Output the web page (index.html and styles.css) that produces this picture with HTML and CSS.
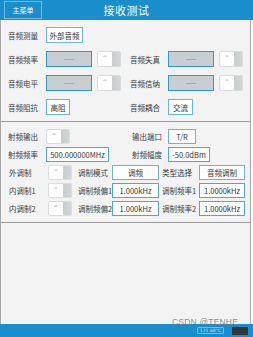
FILE: index.html
```html
<!doctype html>
<html lang="zh">
<head>
    <meta charset="utf-8">
    <title>接收测试</title>
    <link rel="stylesheet" href="styles.css">
</head>
<body>
<div class="screen">
    <header class="topbar">
        <button class="menu-btn">主菜单</button>
        <h1 class="title">接收测试</h1>
        <span></span>
    </header>

    <main class="panel">
        <section class="audio">
            <div class="row">
                <div class="field"><label>音频测量</label><button class="btn w37">外部音频</button></div>
                <div class="field"></div>
            </div>
            <div class="row">
                <div class="field"><label>音频频率</label><span class="readout">-----</span><span class="toggle"></span></div>
                <div class="field"><label>音频失真</label><span class="readout">-----</span><span class="toggle"></span></div>
            </div>
            <div class="row">
                <div class="field"><label>音频电平</label><span class="readout">-----</span><span class="toggle"></span></div>
                <div class="field"><label>音频信纳</label><span class="readout">-----</span><span class="toggle"></span></div>
            </div>
            <div class="row">
                <div class="field"><label>音频阻抗</label><button class="btn w24">高阻</button></div>
                <div class="field"><label>音频耦合</label><button class="btn w25">交流</button></div>
            </div>
        </section>

        <section class="rf">
            <div class="row">
                <div class="field"><label>射频输出</label><span class="toggle off"></span></div>
                <div class="field"><label class="right">输出端口</label><button class="btn w28">T/R</button></div>
            </div>
            <div class="row">
                <div class="field"><label>射频频率</label><span class="entry w63">500.000000MHz</span></div>
                <div class="field"><label class="right">射频幅度</label><span class="entry w42">-50.0dBm</span></div>
            </div>
            <div class="mod-row">
                <label>外调制</label><span class="toggle off"></span>
                <label class="sub">调制模式</label><button class="btn">调频</button>
                <label class="sub2">类型选择</label><button class="btn">音频调制</button>
            </div>
            <div class="mod-row">
                <label>内调制1</label><span class="toggle off"></span>
                <label class="sub">调制频偏1</label><span class="entry">1.000kHz</span>
                <label class="sub2">调制频率1</label><span class="entry">1.0000kHz</span>
            </div>
            <div class="mod-row">
                <label>内调制2</label><span class="toggle off"></span>
                <label class="sub">调制频偏2</label><span class="entry">1.000kHz</span>
                <label class="sub2">调制频率2</label><span class="entry">1.0000kHz</span>
            </div>
        </section>

        <div class="blank"></div>
    </main>

    <footer class="statusbar">
        <span class="temp">121.68°C</span>
        <span class="chip"></span>
    </footer>

    <span class="watermark">CSDN @TENHE</span>
</div>
</body>
</html>
```

FILE: styles.css
```css
body {
    margin: 0;
    background: #fbfbfb;
    font-family: "Noto Sans CJK SC", "Noto Sans", sans-serif;
    color: #3c3c3c;
}

.screen {
    position: relative;
    width: 253px;
    height: 337px;
    display: flex;
    flex-direction: column;
    overflow: hidden;
}

/* top bar */
.topbar {
    height: 20px;
    background: #1a8dcd;
    display: grid;
    grid-template-columns: 1fr auto 1fr;
    align-items: center;
}

.menu-btn {
    justify-self: start;
    margin-left: 4px;
    width: 38px;
    height: 18px;
    padding: 0;
    border: 1px solid #6cb9e2;
    background: #1a8dcd;
    color: #fff;
    font-family: inherit;
    font-size: 7px;
}

.title {
    margin: 0;
    color: #fff;
    font-size: 11px;
    font-weight: normal;
    letter-spacing: 0.5px;
}

/* main panel */
.panel {
    width: 249px;
    height: 304px;
    border-left: 1px solid #a8a8a8;
    border-right: 1px solid #a8a8a8;
    background: #f3f3f3;
    display: flex;
    flex-direction: column;
}

.audio {
    padding: 7px 0 6px;
    border-bottom: 1px solid #9a9a9a;
    display: grid;
    grid-template-rows: repeat(4, 16px);
    row-gap: 8px;
}

.rf {
    padding: 7px 0 6px;
    border-bottom: 1px solid #9a9a9a;
    display: grid;
    grid-template-rows: repeat(5, 15px);
    row-gap: 3px;
}

.blank { flex: 1; }

.row {
    display: flex;
}

.field {
    width: 122px;
    box-sizing: border-box;
    padding-left: 7px;
    display: flex;
    align-items: center;
}

label {
    font-size: 7.5px;
    white-space: nowrap;
}

.field label {
    width: 38px;
    flex: none;
}

.field label.right {
    text-align: right;
    padding-right: 6px;
    box-sizing: border-box;
}

/* controls */
.btn,
.entry,
.readout {
    box-sizing: border-box;
    height: 100%;
    padding: 0;
    font-family: inherit;
    font-size: 7.5px;
    color: #333;
    text-align: center;
    display: flex;
    align-items: center;
    justify-content: center;
    white-space: nowrap;
}

.btn {
    border: 1px solid #6ab4dc;
    background: #fff;
}

.entry {
    border: 1px solid #4da6d8;
    background: #fff;
}

.readout {
    width: 46px;
    border: 1px solid #2f97d0;
    background: #c9cfd0;
    font-family: "Liberation Sans", sans-serif;
    font-size: 6px;
    color: #555;
}

.w24 { width: 24px; }
.w25 { width: 25px; }
.w28 { width: 28px; }
.w37 { width: 37px; }
.w42 { width: 42px; }
.w63 { width: 63px; }

.toggle {
    box-sizing: border-box;
    width: 24px;
    height: 100%;
    margin-left: 5px;
    border: 1px solid #dadddd;
    border-radius: 2px;
    background: linear-gradient(to right, #fff 0, #fff 62%, #c8cccd 62%, #d3d6d7 100%);
    position: relative;
}

.toggle::after {
    content: "";
    position: absolute;
    left: 5px;
    top: 3px;
    width: 4px;
    height: 2px;
    border-radius: 2px 2px 0 0;
    background: #d8d8d8;
}

.toggle.off { margin-left: 0; }

/* modulation rows */
.mod-row {
    padding-left: 8px;
    display: grid;
    grid-template-columns: 39px 24px 40px 47px 40px 46px;
    align-items: center;
}

.mod-row .toggle { height: 15px; }
.mod-row .sub { padding-left: 6px; }
.mod-row .sub2 { padding-left: 3px; }

/* status bar */
.statusbar {
    height: 13px;
    background: #1a8dcd;
    display: flex;
    justify-content: flex-end;
    align-items: center;
    gap: 8px;
    padding-right: 5px;
}

.temp {
    border: 1px solid #6cc0ea;
    border-radius: 1px;
    color: #bfe4f7;
    font-family: "DejaVu Sans", sans-serif;
    font-size: 4.5px;
    line-height: 5px;
    padding: 0 2px;
}

.chip {
    width: 16px;
    height: 8px;
    background: #353535;
}

.watermark {
    position: absolute;
    left: 172px;
    top: 317px;
    font-family: "Liberation Sans", sans-serif;
    font-size: 8.5px;
    color: rgba(120, 120, 120, 0.85);
    letter-spacing: 0.2px;
}
```
